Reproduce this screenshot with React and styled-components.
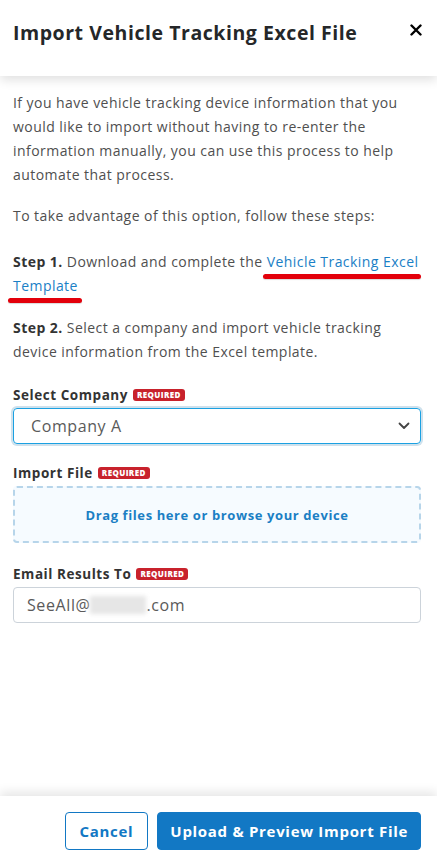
import React from 'react';
import styled, { createGlobalStyle } from 'styled-components';

const GlobalStyle = createGlobalStyle`
  html, body {
    margin: 0;
    padding: 0;
    background: #ffffff;
  }
  * {
    box-sizing: border-box;
  }
`

const Panel = styled.div`
  width: 437px;
  height: 854px;
  display: flex;
  flex-direction: column;
  background: #fff;
  font-family: "Open Sans", "Liberation Sans", sans-serif;
  color: #4d4d4d;
  overflow: hidden;
`

const Header = styled.div`
  height: 76px;
  flex: none;
  display: flex;
  align-items: flex-start;
  justify-content: space-between;
  padding: 19px 14px 0 13px;
  box-shadow: 0 4px 10px rgba(0, 0, 0, 0.12);
  position: relative;
  z-index: 1;
`

const Title = styled.h1`
  margin: 0;
  font-size: 19.5px;
  font-weight: 700;
  letter-spacing: 0.55px;
  color: #252729;
`

const CloseButton = styled.button`
  border: none;
  background: none;
  padding: 0;
  margin-top: 5px;
  width: 14px;
  height: 14px;
  cursor: pointer;
`

const Content = styled.div`
  flex: 1;
  padding: 15px 16px 0 13px;
  position: relative;
`

const Para = styled.p`
  margin: 0 0 ${p => p.$gap ?? 17}px 0;
  font-size: 14px;
  letter-spacing: 0.45px;
  line-height: 24px;
  color: #4f4f4f;
`

const Strong = styled.strong`
  font-weight: 700;
  color: #333;
`

const TemplateLink = styled.a`
  color: #1a80c6;
  text-decoration: none;
`

const Marker = styled.span`
  position: absolute;
  height: 5px;
  border-radius: 3px;
  background: #e3000b;
  box-shadow: 0 1px 1px rgba(0, 0, 0, 0.15);
`

const Field = styled.div`
  margin-top: ${p => p.$top || 0}px;
  display: flex;
  flex-direction: column;
`

const LabelRow = styled.div`
  display: flex;
  align-items: center;
  gap: 5px;
  margin-bottom: 4px;
`

const Label = styled.label`
  font-size: 13.5px;
  font-weight: 700;
  letter-spacing: 0.55px;
  color: #333;
`

const Badge = styled.span`
  background: #c8222c;
  color: #fff;
  font-size: 8px;
  font-weight: 800;
  letter-spacing: 0.4px;
  padding: 1px 4px;
  border-radius: 3px;
  line-height: 10px;
`

const SelectBox = styled.div`
  height: 36px;
  border: 1px solid #1ba1e2;
  border-radius: 4px;
  box-shadow: 0 0 0 2px #cfe1ec;
  display: flex;
  align-items: center;
  justify-content: space-between;
  padding: 0 10px 0 17px;
  font-size: 16px;
  letter-spacing: 0.6px;
  color: #5a5a5a;
`

const DropZone = styled.div`
  height: 57px;
  border: 2px dashed #b7d5ea;
  border-radius: 4px;
  background: #f6fbff;
  display: flex;
  align-items: center;
  justify-content: center;
  font-size: 13px;
  font-weight: 700;
  letter-spacing: 0.6px;
  color: #1b7fc4;
`

const TextInput = styled.div`
  height: 36px;
  border: 1px solid #ccd3da;
  border-radius: 4px;
  display: flex;
  align-items: center;
  padding: 0 13px;
  font-size: 16px;
  letter-spacing: 0.6px;
  color: #5a5a5a;
`

const Blurred = styled.span`
  display: inline-block;
  width: 56px;
  height: 18px;
  background: #e6e6e6;
  filter: blur(2px);
`

const Footer = styled.div`
  height: 58px;
  flex: none;
  display: flex;
  align-items: flex-start;
  justify-content: flex-end;
  gap: 9px;
  padding: 16px 16px 0 0;
  box-shadow: 0 -4px 10px rgba(0, 0, 0, 0.1);
  position: relative;
`

const Button = styled.button`
  height: 38px;
  border-radius: 4px;
  font-family: inherit;
  font-size: 15px;
  font-weight: 700;
  letter-spacing: 0.7px;
  padding: 0 ${p => p.$pad}px;
  border: 1px solid #1278c4;
  background: ${p => (p.$primary ? '#1278c4' : '#fff')};
  color: ${p => (p.$primary ? '#fff' : '#1278c4')};
  cursor: pointer;
`

export default function App() {
  return (
    <Panel>
      <GlobalStyle />
      <Header>
        <Title>Import Vehicle Tracking Excel File</Title>
        <CloseButton aria-label="close">
          <svg width="12" height="12" viewBox="0 0 12 12">
            <path d="M1.5 1.5 L10.5 10.5 M10.5 1.5 L1.5 10.5" stroke="#000" strokeWidth="2.4" strokeLinecap="round" />
          </svg>
        </CloseButton>
      </Header>
      <Content>
        <Para>
          If you have vehicle tracking device information that you would like to import without having to re-enter the information manually, you can use this process to help automate that process.
        </Para>
        <Para $gap={22}>To take advantage of this option, follow these steps:</Para>
        <Para $gap={18}>
          <Strong>Step 1.</Strong> Download and complete the{' '}
          <TemplateLink href="#">Vehicle Tracking Excel Template</TemplateLink>
        </Para>
        <Para $gap={0}>
          <Strong>Step 2.</Strong> Select a company and import vehicle tracking device information from the Excel template.
        </Para>
        <Marker style={{ left: 263, top: 198, width: 158 }} />
        <Marker style={{ left: 8, top: 222, width: 74 }} />

        <Field $top={22}>
          <LabelRow>
            <Label>Select Company</Label>
            <Badge>REQUIRED</Badge>
          </LabelRow>
          <SelectBox>
            <span>Company A</span>
            <svg width="12" height="8" viewBox="0 0 12 8">
              <path d="M1.5 1.5 L6 6 L10.5 1.5" fill="none" stroke="#444" strokeWidth="1.8" strokeLinecap="round" strokeLinejoin="round" />
            </svg>
          </SelectBox>
        </Field>

        <Field $top={20}>
          <LabelRow>
            <Label>Import File</Label>
            <Badge>REQUIRED</Badge>
          </LabelRow>
          <DropZone>Drag files here or browse your device</DropZone>
        </Field>

        <Field $top={22}>
          <LabelRow>
            <Label>Email Results To</Label>
            <Badge>REQUIRED</Badge>
          </LabelRow>
          <TextInput>
            SeeAll@<Blurred />.com
          </TextInput>
        </Field>
      </Content>
      <Footer>
        <Button $pad={14}>Cancel</Button>
        <Button $primary $pad={12}>Upload &amp; Preview Import File</Button>
      </Footer>
    </Panel>
  );
}
